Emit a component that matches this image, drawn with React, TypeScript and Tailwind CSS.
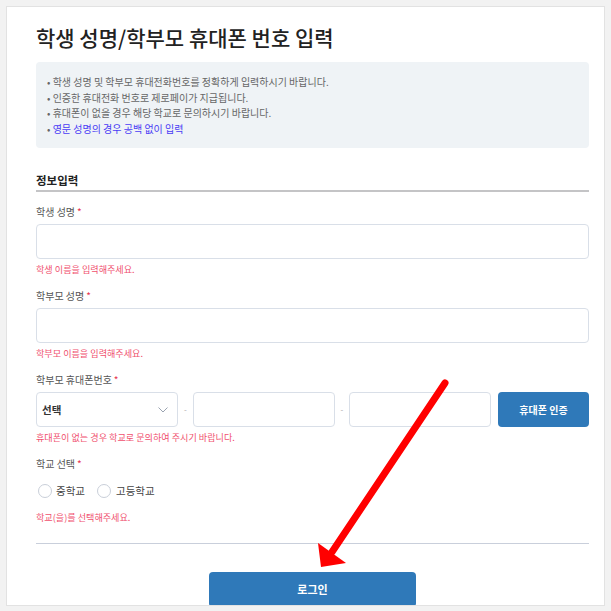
import React from "react";

const Label = ({ text }: { text: string }) => (
  <div className="h-[14px] leading-[14px] text-[10px] text-[#555]">
    {text}
    <span className="text-[#e8334f] ml-[2px]">*</span>
  </div>
);

const Err = ({ text, className = "" }: { text: string; className?: string }) => (
  <div className={"h-[14px] leading-[14px] text-[9.1px] text-[#f0506e] " + className}>{text}</div>
);

export default function App() {
  return (
    <div className="relative w-[611px] h-[611px] bg-[#f2f2f2] font-['Noto_Sans_CJK_KR','Noto_Sans',sans-serif] overflow-hidden">
      <div className="absolute left-[6px] top-[6px] w-[599px] h-[600px] bg-white border border-[#e2e2e2] overflow-hidden">
        <div className="pl-[29px] w-[582px] flex flex-col">
          <h1 className="mt-[16px] h-[28px] leading-[28px] text-[21px] font-medium text-[#222]">
            학생 성명/학부모 휴대폰 번호 입력
          </h1>
          <div className="mt-[11px] h-[86px] w-[553px] bg-[#eff3f6] rounded-[4px] pt-[12px] pl-[11px] text-[10px] leading-[15.5px] text-[#666]">
            <div>• 학생 성명 및 학부모 휴대전화번호를 정확하게 입력하시기 바랍니다.</div>
            <div>• 인증한 휴대전화 번호로 제로페이가 지급됩니다.</div>
            <div>• 휴대폰이 없을 경우 해당 학교로 문의하시기 바랍니다.</div>
            <div className="text-[#4a3cf5]">
              <span className="text-[#666]">• </span>영문 성명의 경우 공백 없이 입력
            </div>
          </div>
          <div className="mt-[24px] w-[553px] h-[20px] leading-[16px] text-[11.5px] font-bold text-[#222] border-b-2 border-[#c4c4c6]">
            정보입력
          </div>
          <div className="mt-[13px]">
            <Label text="학생 성명" />
          </div>
          <div className="mt-[5px] w-[553px] h-[35px] border border-[#d9dfe8] rounded-[4px]" />
          <Err text="학생 이름을 입력해주세요." className="mt-[3px]" />
          <div className="mt-[13px]">
            <Label text="학부모 성명" />
          </div>
          <div className="mt-[5px] w-[553px] h-[35px] border border-[#d9dfe8] rounded-[4px]" />
          <Err text="학부모 이름을 입력해주세요." className="mt-[3px]" />
          <div className="mt-[13px]">
            <Label text="학부모 휴대폰번호" />
          </div>
          <div className="mt-[5px] w-[553px] h-[35px] flex items-center">
            <div className="w-[142px] h-[35px] border border-[#d9dfe8] rounded-[4px] flex items-center justify-between pl-[5px] pr-[9px]">
              <span className="text-[10.5px] font-bold text-[#333]">선택</span>
              <svg width="10" height="6" viewBox="0 0 10 6">
                <path d="M0.5 0.5 L5 5 L9.5 0.5" fill="none" stroke="#9aa3b0" strokeWidth="1" />
              </svg>
            </div>
            <div className="w-[15px] text-center text-[8px] text-[#aaa]">-</div>
            <div className="w-[142px] h-[35px] border border-[#d9dfe8] rounded-[4px]" />
            <div className="w-[14px] text-center text-[8px] text-[#aaa]">-</div>
            <div className="w-[142px] h-[35px] border border-[#d9dfe8] rounded-[4px]" />
            <div className="ml-[7px] w-[91px] h-[35px] bg-[#2f79b9] rounded-[4px] flex items-center justify-center text-white text-[10px] font-bold">
              휴대폰 인증
            </div>
          </div>
          <Err text="휴대폰이 없는 경우 학교로 문의하여 주시기 바랍니다." className="mt-[3px]" />
          <div className="mt-[13px]">
            <Label text="학교 선택" />
          </div>
          <div className="mt-[10px] h-[20px] flex items-center text-[10.5px] text-[#444]">
            <span className="ml-[2px] w-[14px] h-[14px] rounded-full border border-[#c9cfd9] bg-white" />
            <span className="ml-[4px]">중학교</span>
            <span className="ml-[12px] w-[14px] h-[14px] rounded-full border border-[#c9cfd9] bg-white" />
            <span className="ml-[5px]">고등학교</span>
          </div>
          <Err text="학교(을)를 선택해주세요." className="mt-[9px]" />
          <div className="mt-[19px] w-[553px] h-px bg-[#c9cfdb]" />
          <div className="mt-[28px] ml-[173px] w-[207px] h-[35px] bg-[#2f79b9] rounded-[4px] flex items-center justify-center text-white text-[11px] font-bold">
            로그인
          </div>
        </div>
      </div>
      <svg className="absolute left-0 top-0 pointer-events-none" width="611" height="611" viewBox="0 0 611 611">
        <line x1="445" y1="383" x2="332" y2="552" stroke="#ff0000" strokeWidth="7" strokeLinecap="round" />
        <polygon points="318,543 346,563 321,567" fill="#ff0000" />
      </svg>
    </div>
  );
}
